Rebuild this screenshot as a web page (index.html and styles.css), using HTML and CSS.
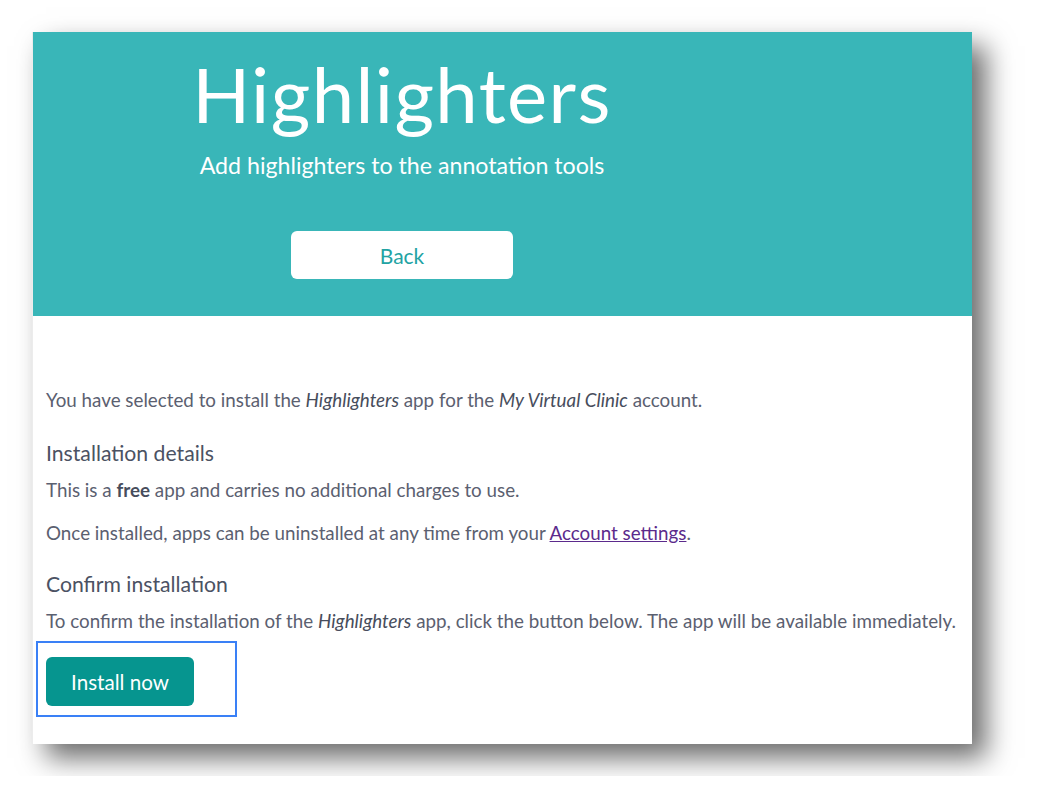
FILE: index.html
```html
<!DOCTYPE html>
<html lang="en">
<head>
<meta charset="utf-8">
<title>Highlighters</title>
<link rel="stylesheet" href="styles.css">
</head>
<body>
<div class="card">
  <header class="hero">
    <div class="hero-inner">
      <h1 class="title">Highlighters</h1>
      <p class="subtitle">Add highlighters to the annotation tools</p>
      <a class="back-btn" href="#">Back</a>
    </div>
  </header>
  <main class="content">
    <p class="intro">You have selected to install the <em>Highlighters</em> app for the <em>My Virtual Clinic</em> account.</p>
    <h2 class="section-title">Installation details</h2>
    <p class="text">This is a <strong>free</strong> app and carries no additional charges to use.</p>
    <p class="text gap">Once installed, apps can be uninstalled at any time from your <a class="link" href="#">Account settings</a>.</p>
    <h2 class="section-title">Confirm installation</h2>
    <p class="text">To confirm the installation of the <em>Highlighters</em> app, click the button below. The app will be available immediately.</p>
    <div class="focus-box">
      <button class="install-btn">Install now</button>
    </div>
  </main>
</div>
</body>
</html>
```

FILE: styles.css
```css
* { box-sizing: border-box; }
html, body { margin: 0; padding: 0; background: #ffffff; }
body {
  padding: 32px;
  font-family: "Lato", "Open Sans", sans-serif;
}
.card {
  width: 940px;
  height: 712px;
  background: #ffffff;
  box-shadow: 14px 14px 26px rgba(0, 0, 0, 0.58);
  border-left: 1px solid #ececec;
}
.hero {
  height: 284px;
  background: #39b6b8;
  padding-left: 143px;
}
.hero-inner {
  width: 452px;
  display: flex;
  flex-direction: column;
  align-items: center;
}
.title {
  margin: 20px 0 0;
  font-weight: 400;
  font-size: 76px;
  line-height: 84px;
  color: #ffffff;
  letter-spacing: 1.4px;
}
.subtitle {
  margin: 16px 0 0;
  font-size: 23.2px;
  line-height: 26px;
  color: #ffffff;
}
.back-btn {
  margin-top: 53px;
  width: 222px;
  height: 48px;
  border-radius: 6px;
  background: #ffffff;
  color: #22a3a3;
  font-size: 21px;
  text-decoration: none;
  display: flex;
  align-items: center;
  justify-content: center;
}
.content {
  padding: 72px 14px 0 13px;
  color: #5b6070;
  font-size: 18.8px;
}
.intro { margin: 0 0 28px; line-height: 24px; }
.section-title {
  margin: 0 0 12px;
  font-size: 21.2px;
  font-weight: 400;
  line-height: 26px;
  color: #4b5263;
}
.text { margin: 0 0 19px; line-height: 24px; }
.text.gap { margin-bottom: 26px; }
.content em { font-style: italic; color: #474d5c; }
.content strong { font-weight: 700; color: #474d5c; }
.link { color: #5b2a8c; text-decoration: underline; }
.focus-box {
  margin: -11px 0 0 -10px;
  width: 201px;
  height: 76px;
  border: 2px solid #3a80f6;
  padding: 14px 0 0 8px;
}
.install-btn {
  width: 148px;
  height: 49px;
  border: none;
  border-radius: 6px;
  background: #06958f;
  color: #ffffff;
  font-family: "Lato", "Open Sans", sans-serif;
  font-size: 20.6px;
  padding: 0;
}
```
